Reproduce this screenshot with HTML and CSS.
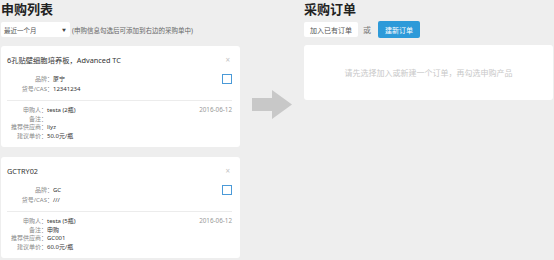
FILE: index.html
```html
<!DOCTYPE html>
<html lang="zh">
<head>
<meta charset="utf-8">
<link rel="stylesheet" href="styles.css">
</head>
<body>
<div class="page">
  <section class="left">
    <h1 class="title">申购列表</h1>
    <div class="controls">
      <div class="select"><span>最近一个月</span><span class="caret">▼</span></div>
      <span class="hint">(申购信息勾选后可添加到右边的采购单中)</span>
    </div>
    <div class="card">
      <div class="card-head"><span class="card-title">6孔贴壁细胞培养板，Advanced TC</span><span class="close">×</span></div>
      <div class="card-info">
        <div class="rows top">
          <div class="row"><span class="lbl">品牌：</span><span class="val">厦宁</span></div>
          <div class="row"><span class="lbl">货号/CAS：</span><span class="val">12341234</span></div>
        </div>
        <span class="check"></span>
      </div>
      <div class="card-foot">
        <div class="rows bottom">
          <div class="row"><span class="lbl">申购人：</span><span class="val">testa (2瓶)</span></div>
          <div class="row"><span class="lbl">备注：</span><span class="val"></span></div>
          <div class="row"><span class="lbl">推荐供应商：</span><span class="val">liyz</span></div>
          <div class="row"><span class="lbl">建议单价：</span><span class="val">50.0元/瓶</span></div>
        </div>
        <span class="date">2016-06-12</span>
      </div>
    </div>
    <div class="card">
      <div class="card-head"><span class="card-title">GCTRY02</span><span class="close">×</span></div>
      <div class="card-info">
        <div class="rows top">
          <div class="row"><span class="lbl">品牌：</span><span class="val">GC</span></div>
          <div class="row"><span class="lbl">货号/CAS：</span><span class="val">///</span></div>
        </div>
        <span class="check"></span>
      </div>
      <div class="card-foot">
        <div class="rows bottom">
          <div class="row"><span class="lbl">申购人：</span><span class="val">testa (5瓶)</span></div>
          <div class="row"><span class="lbl">备注：</span><span class="val">申购</span></div>
          <div class="row"><span class="lbl">推荐供应商：</span><span class="val">GC001</span></div>
          <div class="row"><span class="lbl">建议单价：</span><span class="val">60.0元/瓶</span></div>
        </div>
        <span class="date">2016-06-12</span>
      </div>
    </div>
  </section>
  <div class="mid">
    <svg class="arrow" width="40" height="29" viewBox="0 0 40 29"><polygon points="0,8 20,8 20,0 40,14.5 20,29 20,21 0,21" fill="#c8c8c8"/></svg>
  </div>
  <section class="right">
    <h1 class="title">采购订单</h1>
    <div class="controls">
      <span class="btn-white">加入已有订单</span>
      <span class="or">或</span>
      <span class="btn-blue">建新订单</span>
    </div>
    <div class="order-box">请先选择加入或新建一个订单，再勾选申购产品</div>
  </section>
</div>
</body>
</html>
```
FILE: styles.css
```css
html, body {
  margin: 0;
  padding: 0;
  background: #eeeeee;
  font-family: "Noto Sans", "Noto Sans CJK SC", sans-serif;
  color: #333;
}
.page {
  display: flex;
  align-items: flex-start;
}
.left {
  width: 239px;
  margin-left: 1px;
}
.mid {
  width: 64px;
  display: flex;
  justify-content: center;
  padding-top: 90px;
}
.arrow { display: block; }
.right {
  width: 249px;
}
.title {
  margin: 0;
  font-family: "Noto Sans CJK SC", sans-serif;
  font-size: 13px;
  font-weight: 700;
  line-height: 18px;
  color: #222;
}
.controls {
  margin-top: 3px;
  height: 17px;
  display: flex;
  align-items: center;
}
.select {
  width: 62px;
  height: 15px;
  background: #fff;
  border-radius: 2px;
  display: flex;
  align-items: center;
  justify-content: space-between;
  padding: 0 4px 0 3px;
  font-size: 6.5px;
  color: #555;
}
.caret {
  font-size: 4px;
  color: #444;
}
.hint {
  margin-left: 2px;
  font-size: 6.5px;
  color: #666;
}
.card {
  margin-top: 8px;
  background: #fff;
  border-radius: 3px;
  padding: 0 8px 7px 6px;
  height: 101px;
  box-sizing: border-box;
}
.card + .card { margin-top: 10px; }
.card-head {
  padding-top: 8px;
  display: flex;
  justify-content: space-between;
  align-items: center;
  line-height: 12px;
}
.card-title {
  font-size: 7.3px;
  color: #333;
}
.close {
  font-size: 8px;
  color: #c4c4c4;
  margin-right: 2px;
}
.card-info {
  margin-top: 8px;
  display: flex;
  justify-content: space-between;
  align-items: flex-start;
  padding-bottom: 6px;
  border-bottom: 1px solid #ececec;
}
.rows .row {
  display: flex;
  font-size: 6px;
}
.top .row { line-height: 10px; }
.top .lbl { width: 46px; }
.bottom .row { line-height: 8.5px; }
.bottom .lbl { width: 40px; }
.lbl {
  text-align: right;
  color: #888;
  white-space: nowrap;
}
.val { color: #333; }
.check {
  width: 8px;
  height: 8px;
  border: 1.5px solid #4a9ad8;
  margin-right: 0;
}
.card-foot {
  padding-top: 5px;
  display: flex;
  justify-content: space-between;
  align-items: flex-start;
}
.date {
  font-size: 6.3px;
  line-height: 8.5px;
  color: #999;
}
.btn-white {
  width: 54px;
  height: 15px;
  background: #fff;
  border-radius: 2px;
  font-size: 7px;
  color: #555;
  display: flex;
  align-items: center;
  justify-content: center;
}
.or {
  margin: 0 7px 0 5px;
  font-size: 8px;
  color: #777;
}
.btn-blue {
  width: 42px;
  height: 17px;
  background: #2d9ad9;
  border-radius: 2px;
  font-size: 7px;
  color: #fff;
  display: flex;
  align-items: center;
  justify-content: center;
}
.order-box {
  margin-top: 7px;
  height: 55px;
  background: #fff;
  border-radius: 3px;
  display: flex;
  align-items: center;
  justify-content: center;
  font-size: 8px;
  color: #c8c8c8;
}
```
